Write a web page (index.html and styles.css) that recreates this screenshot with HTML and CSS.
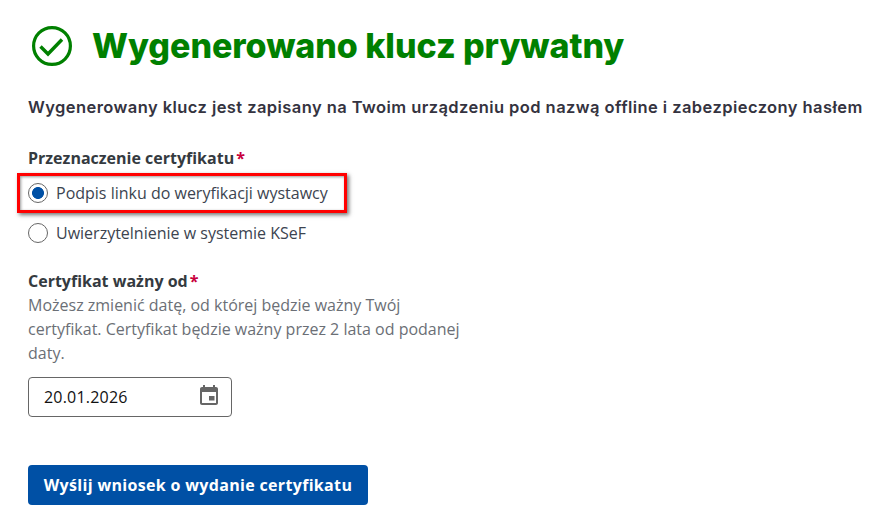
FILE: index.html
```html
<!DOCTYPE html>
<html lang="pl">

<head>
    <meta charset="UTF-8">
    <title>Wygenerowano klucz prywatny</title>
    <link rel="stylesheet" href="styles.css">
</head>

<body>
    <div class="container">
        <div class="title-row">
            <svg class="title-icon" width="42" height="42" viewBox="0 0 42 42" fill="none" stroke="#008000">
                <circle cx="21" cy="22" r="18.4" stroke-width="3.2" />
                <path d="M9.5 22.5 L17 30 L31 15.5" stroke-width="3.4" />
            </svg>
            <h1>Wygenerowano klucz prywatny</h1>
        </div>

        <p class="lead">Wygenerowany klucz jest zapisany na Twoim urządzeniu pod nazwą offline i zabezpieczony hasłem</p>

        <form>
            <div class="group">
                <div class="label">Przeznaczenie certyfikatu<span class="req">*</span></div>
                <label class="radio marked">
                    <span class="dot checked"></span>
                    Podpis linku do weryfikacji wystawcy
                </label>
                <label class="radio">
                    <span class="dot"></span>
                    Uwierzytelnienie w systemie KSeF
                </label>
            </div>

            <div class="group date-group">
                <div class="label">Certyfikat ważny od<span class="req">*</span></div>
                <p class="hint">Możesz zmienić datę, od której będzie ważny Twój certyfikat. Certyfikat będzie ważny przez 2 lata od podanej daty.</p>
                <div class="date-input">
                    <span>20.01.2026</span>
                    <svg class="date-icon" width="24" height="24" viewBox="0 0 24 24" fill="#666">
                        <path d="M19 4h-1V2h-2v2H8V2H6v2H5c-1.1 0-2 .9-2 2v14c0 1.1.9 2 2 2h14c1.1 0 2-.9 2-2V6c0-1.1-.9-2-2-2zm0 16H5V9h14v11zM12 13h5.5v4.5H12z" />
                    </svg>
                </div>
            </div>

            <button type="button">Wyślij wniosek o wydanie certyfikatu</button>
        </form>
    </div>
</body>

</html>
```

FILE: styles.css
```css
* {
    box-sizing: border-box;
}

body {
    margin: 0;
    background-color: #fff;
    font-family: "Open Sans", sans-serif;
    font-size: 16px;
    color: #343a40;
}

.container {
    padding: 24px 0 0 28px;
}

.title-row {
    display: flex;
    align-items: center;
    gap: 19px;
    margin-left: 3px;
    height: 42px;
}

.title-icon {
    flex: none;
}

h1 {
    margin: 0;
    font-family: Inter, sans-serif;
    font-size: 34px;
    font-weight: 800;
    letter-spacing: -0.05px;
    color: #008000;
    white-space: nowrap;
}

.lead {
    margin: 30px 0 0;
    font-family: Inter, sans-serif;
    font-size: 16.5px;
    font-weight: 600;
    letter-spacing: 0.43px;
    line-height: 22px;
    color: #343340;
    white-space: nowrap;
}

.group {
    margin-top: 28px;
}

.label {
    font-weight: 700;
    line-height: 24px;
    color: #343a40;
}

.req {
    margin-left: 2px;
    color: #c8003c;
    font-weight: 700;
}

.radio {
    display: flex;
    align-items: center;
    gap: 8px;
    width: 318px;
    height: 40px;
    color: #3c4450;
    white-space: nowrap;
}

.radio.marked {
    width: 330px;
    height: 40px;
    margin: 3px 0 0 -11px;
    padding-left: 8px;
    border: 3px solid #f00;
    box-shadow: 2px 2px 4px rgba(0, 0, 0, 0.55), inset 1px 1px 3px rgba(0, 0, 0, 0.4);
}

.dot {
    flex: none;
    width: 20px;
    height: 20px;
    border: 1px solid #666;
    border-radius: 50%;
    background-color: #fff;
}

.dot.checked {
    background: radial-gradient(circle, #0050a5 0, #0050a5 5.6px, #fff 6.3px);
}

.date-group {
    margin-top: 16px;
}

.hint {
    width: 440px;
    margin: 0;
    line-height: 24px;
    color: #6b6f76;
}

.date-input {
    display: flex;
    align-items: center;
    justify-content: space-between;
    width: 204px;
    height: 40px;
    margin-top: 12px;
    padding: 0 10px 0 15px;
    border: 1px solid #666;
    border-radius: 4px;
    letter-spacing: 0.2px;
    color: #111;
}

.date-icon {
    margin-bottom: 4px;
}

button {
    display: block;
    width: 340px;
    height: 40px;
    margin-top: 48px;
    border: 0;
    border-radius: 4px;
    background-color: #0050a5;
    color: #fff;
    font-family: "Open Sans", sans-serif;
    font-size: 16px;
    font-weight: 700;
    letter-spacing: 0.33px;
}
```
